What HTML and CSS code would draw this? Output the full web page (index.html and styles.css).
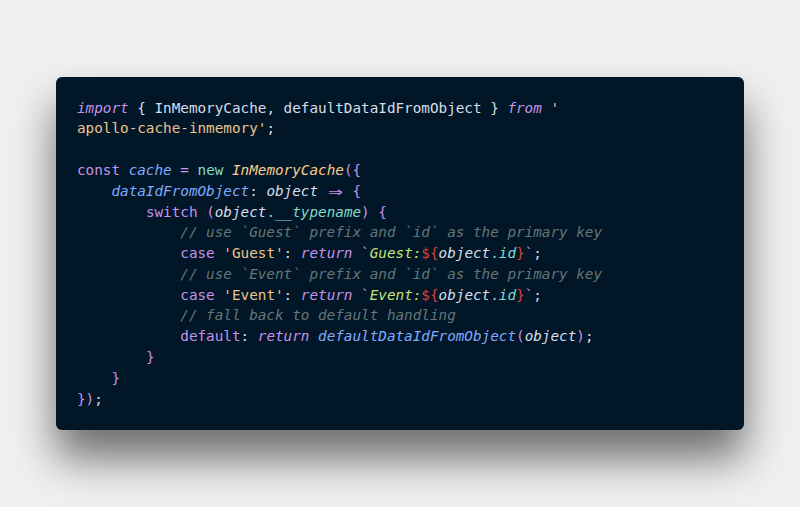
FILE: index.html
```html
<!DOCTYPE html>
<html lang="en">
<head>
<meta charset="utf-8">
<title>InMemoryCache</title>
<link rel="stylesheet" href="styles.css">
</head>
<body>
<main class="card">
<pre class="code"><code><span class="kw">import</span> { InMemoryCache, defaultDataIdFromObject } <span class="kw">from</span> <span class="str">'</span>
<span class="str">apollo-cache-inmemory'</span>;

<span class="st">const</span> <span class="var">cache</span> <span class="op">=</span> <span class="new">new</span> <span class="cls">InMemoryCache</span><span class="op">({</span>
    <span class="var">dataIdFromObject</span>: <span class="obj">object</span> <span class="arrow">⇒</span> <span class="op">{</span>
        <span class="st">switch</span> <span class="op">(</span><span class="obj">object</span><span class="dot">.</span><span class="prop">__typename</span><span class="op">)</span> <span class="op">{</span>
            <span class="cm">// use `Guest` prefix and `id` as the primary key</span>
            <span class="st">case</span> <span class="str">'Guest'</span>: <span class="kw">return</span> <span class="op">`</span><span class="tpl">Guest:</span><span class="sub">${</span><span class="obj">object</span><span class="dot">.</span><span class="prop">id</span><span class="sub">}</span><span class="op">`</span>;
            <span class="cm">// use `Event` prefix and `id` as the primary key</span>
            <span class="st">case</span> <span class="str">'Event'</span>: <span class="kw">return</span> <span class="op">`</span><span class="tpl">Event:</span><span class="sub">${</span><span class="obj">object</span><span class="dot">.</span><span class="prop">id</span><span class="sub">}</span><span class="op">`</span>;
            <span class="cm">// fall back to default handling</span>
            <span class="st">default</span>: <span class="kw">return</span> <span class="var">defaultDataIdFromObject</span><span class="op">(</span><span class="obj">object</span><span class="op">)</span>;
        <span class="op">}</span>
    <span class="op">}</span>
<span class="op">})</span>;</code></pre>
</main>
</body>
</html>
```
FILE: styles.css
```css
html, body {
  margin: 0;
  height: 100%;
}

body {
  background: #f0f0f0;
  display: flex;
  align-items: center;
  justify-content: center;
}

.card {
  width: 688px;
  box-sizing: border-box;
  padding: 21px;
  background: #011627;
  border-radius: 6px;
  box-shadow: 0 28px 44px rgba(0, 0, 0, 0.55);
}

.code {
  margin: 0;
  font-family: "DejaVu Sans Mono", monospace;
  font-size: 14.3px;
  line-height: 20.8px;
  color: #d6deeb;
  white-space: pre;
}

.kw { color: #c792ea; font-style: italic; }
.st { color: #c792ea; }
.op { color: #c792ea; }
.str { color: #ecc48d; }
.var { color: #82aaff; font-style: italic; }
.new { color: #7fdbca; }
.cls { color: #ffcb8b; font-style: italic; }
.obj { color: #d6deeb; font-style: italic; }
.dot { color: #7fdbca; }
.prop { color: #7fdbca; font-style: italic; }
.cm { color: #637777; font-style: italic; }
.tpl { color: #c5e478; font-style: italic; }
.sub { color: #d3423e; }
.arrow {
  display: inline-block;
  width: 2ch;
  text-align: center;
  color: #c792ea;
  transform: scale(1.7, 1.2);
}
```
